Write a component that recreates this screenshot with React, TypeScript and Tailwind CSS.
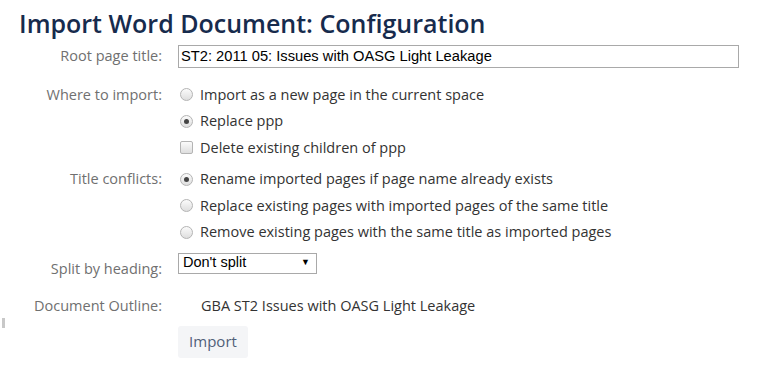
import React from "react";

const font = { fontFamily: '"Open Sans", "Noto Sans", sans-serif' };
const arial = { fontFamily: '"Liberation Sans", Arial, sans-serif' };

function Radio({ checked }: { checked?: boolean }) {
  return (
    <span className="flex h-[13px] w-[13px] shrink-0 items-center justify-center rounded-full border border-[#b4b4b4] bg-gradient-to-b from-[#fbfbfb] to-[#dedede]">
      {checked && <span className="h-[5px] w-[5px] rounded-full bg-[#444]" />}
    </span>
  );
}

function Checkbox() {
  return <span className="h-[13px] w-[13px] shrink-0 rounded-[2px] border border-[#b4b4b4] bg-gradient-to-b from-[#fbfbfb] to-[#dedede]" />;
}

function Option({ children, kind, checked }: { children: React.ReactNode; kind: "radio" | "checkbox"; checked?: boolean }) {
  return (
    <div className="flex h-[26.5px] items-center gap-[7px] pl-[2px]">
      {kind === "radio" ? <Radio checked={checked} /> : <Checkbox />}
      <span>{children}</span>
    </div>
  );
}

function Label({ children }: { children: React.ReactNode }) {
  return <div className="flex h-[26.5px] items-center justify-end text-[#707070]">{children}</div>;
}

export default function App() {
  return (
    <div className="relative h-[376px] w-[759px] bg-white text-[14.5px] text-[#333]" style={font}>
      <h1 className="pl-[19px] pt-[6px] text-[25px] font-semibold leading-[34px] text-[#172b4d]">
        Import Word Document: Configuration
      </h1>

      <div className="mt-[3px] grid grid-cols-[162px_1fr] gap-x-[16px]">
        <Label>Root page title:</Label>
        <div className="flex items-center">
          <div
            className="flex h-[23px] w-[561px] items-center border border-[#a9a9a9] px-[2px] text-[14.7px] text-black"
            style={arial}
          >
            ST2: 2011 05: Issues with OASG Light Leakage
          </div>
        </div>

        <div className="mt-[12px]">
          <Label>Where to import:</Label>
        </div>
        <div className="mt-[12px] flex flex-col">
          <Option kind="radio">Import as a new page in the current space</Option>
          <Option kind="radio" checked>Replace ppp</Option>
          <Option kind="checkbox">Delete existing children of ppp</Option>
        </div>

        <div className="mt-[5px]">
          <Label>Title conflicts:</Label>
        </div>
        <div className="mt-[5px] flex flex-col">
          <Option kind="radio" checked>Rename imported pages if page name already exists</Option>
          <Option kind="radio">Replace existing pages with imported pages of the same title</Option>
          <Option kind="radio">Remove existing pages with the same title as imported pages</Option>
        </div>

        <div className="mt-[10px]">
          <Label>Split by heading:</Label>
        </div>
        <div className="mt-[7px] flex items-start">
          <div
            className="flex h-[21px] w-[139px] items-center justify-between border border-[#a9a9a9] pl-[4px] pr-[6px] text-[14.5px] text-black"
            style={arial}
          >
            <span>Don't split</span>
            <span className="text-[9px]">▼</span>
          </div>
        </div>

        <div className="mt-[11px]">
          <Label>Document Outline:</Label>
        </div>
        <div className="mt-[11px] flex h-[26.5px] items-center">
          <span className="ml-[23px]">GBA ST2 Issues with OASG Light Leakage</span>
        </div>

        <div />
        <div className="mt-[6px]">
          <button className="h-[32px] w-[70px] rounded-[3px] bg-[#f4f5f7] text-[15px] text-[#505f79]">Import</button>
        </div>
      </div>

      <div className="absolute left-[2px] top-[318px] h-[10px] w-[3px] bg-[#c8c8c8]" />
    </div>
  );
}
